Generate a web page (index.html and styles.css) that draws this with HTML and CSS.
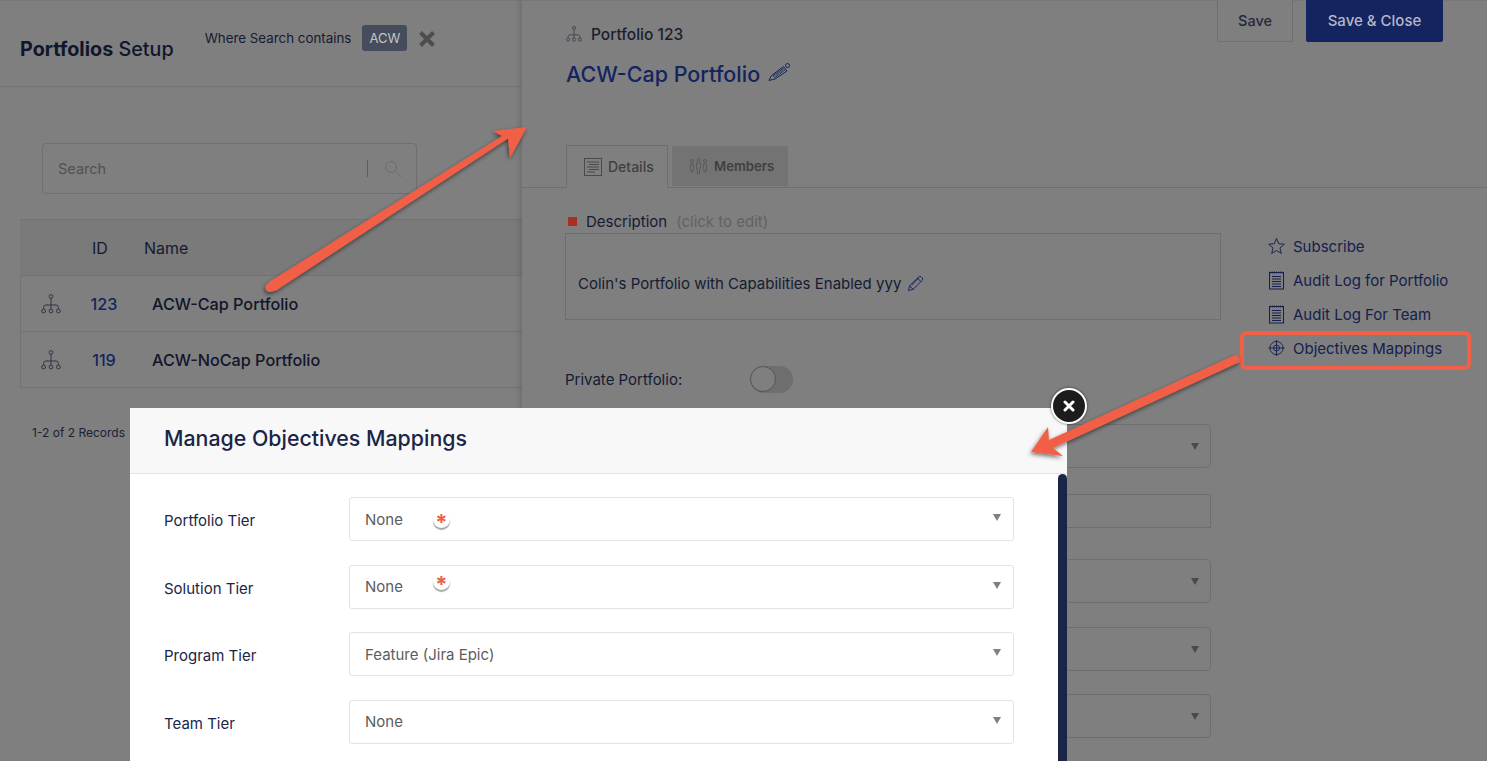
FILE: index.html
```html
<!DOCTYPE html>
<html lang="en">
<head>
    <meta charset="UTF-8">
    <title>Portfolios Setup</title>
    <link rel="stylesheet" href="styles.css">
</head>
<body>
    <svg width="0" height="0" class="defs">
        <defs>
            <symbol id="tree" viewBox="0 0 20 20">
                <g fill="none" stroke="currentColor" stroke-width="1">
                    <circle cx="10" cy="2.5" r="1.9"/>
                    <circle cx="2.6" cy="17" r="1.9"/>
                    <circle cx="10" cy="17" r="1.9"/>
                    <circle cx="17.4" cy="17" r="1.9"/>
                    <path d="M10 4.4V15M2.6 15V13.400Q2.6 11 5 11H15Q17.4 11 17.4 13.400V15"/>
                </g>
            </symbol>
            <symbol id="log" viewBox="0 0 16 19">
                <g fill="none" stroke="currentColor" stroke-width="1">
                    <rect x="1" y="1.5" width="14" height="16.5"/>
                    <path d="M3.5 5.5H12.5M3.5 8H12.5M3.5 10.5H12.5M3.5 13H12.5M3.5 15.5H12.5"/>
                    <path d="M2 .5V2.5M4 .5V2.5M6 .5V2.5M8 .5V2.5M10 .5V2.5M12 .5V2.5M14 .5V2.5" stroke-width=".8"/>
                </g>
            </symbol>
            <symbol id="pencil" viewBox="0 0 18 18">
                <g fill="none" stroke="currentColor" stroke-width="1">
                    <path d="M1.5 16.5L2.8 11.5L12.5 1.8Q13.6.8 14.8 1.8L16.2 3.2Q17.2 4.4 16.2 5.5L6.5 15.2Z"/>
                    <path d="M2.8 11.5L6.5 15.2M11 3.3L14.7 7M4.8 10.8L12.6 3"/>
                </g>
            </symbol>
        </defs>
    </svg>

    <div class="page">
        <div class="left">
            <header class="top">
                <h1><b>Portfolios</b> Setup</h1>
                <div class="filter">
                    <span>Where Search contains</span>
                    <span class="chip">ACW</span>
                    <svg class="clear" width="18" height="18" viewBox="0 0 18 18"><path d="M2.5 2.5L15.5 15.5M15.5 2.5L2.5 15.5" stroke="#4d4d4d" stroke-width="4"/></svg>
                </div>
            </header>
            <div class="search">
                <span>Search</span>
                <div class="search-end">
                    <i></i>
                    <svg width="18" height="18" viewBox="0 0 18 18" fill="none" stroke="#6d6d6d" stroke-width="1"><circle cx="7" cy="7" r="5.5"/><path d="M11 11L17 17"/></svg>
                </div>
            </div>
            <div class="table">
                <div class="thead"><span class="col-id">ID</span><span>Name</span></div>
                <div class="row">
                    <svg class="tree" width="20" height="20"><use href="#tree"/></svg>
                    <a class="id">123</a><span class="name">ACW-Cap Portfolio</span>
                </div>
                <div class="row">
                    <svg class="tree" width="20" height="20"><use href="#tree"/></svg>
                    <a class="id">119</a><span class="name">ACW-NoCap Portfolio</span>
                </div>
            </div>
            <p class="records">1-2 of 2 Records</p>
        </div>

        <div class="panel">
            <div class="panel-actions">
                <button class="btn">Save</button>
                <button class="btn primary">Save &amp; Close</button>
            </div>
            <div class="crumb"><svg width="16" height="16"><use href="#tree"/></svg>Portfolio 123</div>
            <h2>ACW-Cap Portfolio
                <svg class="title-pencil" width="22" height="20" viewBox="0 0 22 20" fill="none" stroke="#14245f"><path d="M1 18.500L3.500 13.500L15.500 4.500L19 9L7 17Z" stroke-width="1"/><path d="M5 14L16 6M6.500 15.500L17 7.500" stroke-width="1.400" stroke-dasharray="1 .7"/><circle cx="19.500" cy="3.500" r="2" stroke-width="1"/></svg>
            </h2>
            <div class="tabs">
                <div class="tab active">
                    <svg width="18" height="18" viewBox="0 0 18 18" fill="none" stroke="#4a4a4a"><rect x=".5" y=".5" width="17" height="17"/><path d="M3 4H15M5 6.5H15M3 9H15M5 11.5H15M3 14H11"/></svg>
                    Details
                </div>
                <div class="tab">
                    <svg width="19" height="16" viewBox="0 0 19 16" fill="none" stroke="#555" stroke-width=".8"><circle cx="3" cy="3" r="1.500"/><circle cx="9.500" cy="2" r="1.500"/><circle cx="16" cy="3" r="1.500"/><path d="M1.500 6H4.500V11H4V14H2V11H1.500ZM7.500 5H11.500V11H10.500V15.500H8.500V11H7.500ZM14.500 6H17.500V11H17V14H15V11H14.500Z"/></svg>
                    Members
                </div>
            </div>
            <div class="panel-body">
                <div class="main-col">
                    <div class="desc-title"><i class="square"></i>Description<span>(click to edit)</span></div>
                    <div class="desc-box">Colin's Portfolio with Capabilities Enabled yyy
                        <svg class="desc-pencil" width="17" height="17"><use href="#pencil"/></svg>
                    </div>
                    <div class="private">
                        <label>Private Portfolio:</label>
                        <span class="toggle"><i></i></span>
                    </div>
                    <div class="bg-field first"><i class="caret"></i></div>
                    <div class="bg-input"></div>
                    <div class="bg-field f3"><i class="caret"></i></div>
                    <div class="bg-field f4"><i class="caret"></i></div>
                    <div class="bg-field f5"><i class="caret"></i></div>
                </div>
                <ul class="links">
                    <li><svg width="18" height="18" viewBox="0 0 18 18" fill="none" stroke="currentColor"><path d="M9 1L11.300 6.600L17.300 7.100L12.700 11L14.100 16.900L9 13.700L3.900 16.900L5.300 11L.7 7.100L6.700 6.600Z"/></svg>Subscribe</li>
                    <li><svg width="16" height="19"><use href="#log"/></svg>Audit Log for Portfolio</li>
                    <li><svg width="16" height="19"><use href="#log"/></svg>Audit Log For Team</li>
                    <li><svg width="16" height="16" viewBox="0 0 16 16" fill="none" stroke="currentColor" stroke-width=".9"><circle cx="8" cy="8" r="6.600"/><circle cx="8" cy="8" r="3"/><path d="M8 0V16M0 8H16"/></svg>Objectives Mappings</li>
                </ul>
            </div>
        </div>
    </div>

    <div class="modal">
        <div class="modal-head">Manage Objectives Mappings</div>
        <div class="modal-body">
            <div class="form-row">
                <label>Portfolio Tier</label>
                <div class="select">None<span class="req">*</span><i class="caret"></i></div>
            </div>
            <div class="form-row">
                <label>Solution Tier</label>
                <div class="select">None<span class="req up">*</span><i class="caret"></i></div>
            </div>
            <div class="form-row">
                <label>Program Tier</label>
                <div class="select">Feature (Jira Epic)<i class="caret"></i></div>
            </div>
            <div class="form-row">
                <label>Team Tier</label>
                <div class="select">None<i class="caret"></i></div>
            </div>
        </div>
        <div class="scrollbar"></div>
        <div class="modal-close">
            <svg width="12" height="12" viewBox="0 0 12 12"><path d="M2 2L10 10M10 2L2 10" stroke="#fff" stroke-width="3" stroke-linecap="round"/></svg>
        </div>
    </div>

    <!-- annotation arrows -->
    <div class="callout"></div>
    <svg class="arrows" width="1487" height="761" viewBox="0 0 1487 761">
        <defs>
            <filter id="arrowShadow" x="-20%" y="-20%" width="140%" height="140%">
                <feDropShadow dx="-1" dy="2" stdDeviation="2" flood-color="#000" flood-opacity=".55"/>
            </filter>
        </defs>
        <g fill="#f15f47" filter="url(#arrowShadow)">
            <path d="M265.500 286Q265 291 270 292L276 290.500L508 138.500L510 158L527 127L493 131L502 136L269 282Z"/>
            <path d="M1235 355Q1241 356 1239.500 362L1053 448L1063 456L1031 452L1048 427L1049 440Z"/>
        </g>
    </svg>
</body>
</html>
```

FILE: styles.css
```css
* {
    box-sizing: border-box;
}
html, body {
    margin: 0;
    height: 761px;
    overflow: hidden;
}
body {
    position: relative;
    width: 1487px;
    background: #7f7f7f;
    font-family: Inter, "Liberation Sans", sans-serif;
    color: #10162b;
}
.defs {
    position: absolute;
}
i {
    display: block;
}
.page {
    display: flex;
    height: 761px;
    border-top: 1px solid #777;
}

/* left list */
.left {
    width: 522px;
    flex: none;
}
.top {
    display: flex;
    height: 86px;
    padding-left: 20px;
    border-bottom: 1px solid #747474;
}
h1 {
    margin: 36px 0 0;
    font-size: 19.750px;
    line-height: 25px;
    font-weight: 500;
    color: #10162b;
}
h1 b {
    font-weight: 700;
}
.filter {
    display: flex;
    align-items: center;
    height: 26px;
    margin: 24px 0 0 31px;
    font-size: 13.350px;
    color: #141b33;
}
.chip {
    margin-left: 11px;
    padding: 0 7px;
    height: 26px;
    line-height: 26px;
    background: #454d5c;
    color: #c4c4c4;
    border-radius: 3px;
    font-size: 13px;
}
.clear {
    margin: 2px 0 0 11px;
}
.search {
    display: flex;
    align-items: center;
    justify-content: space-between;
    width: 375px;
    height: 51px;
    margin: 56px 0 0 42px;
    padding: 0 14px 0 15px;
    border: 1px solid #6f6f6f;
    border-radius: 4px;
    font-size: 14.500px;
    color: #515151;
}
.search-end {
    display: flex;
    align-items: center;
    gap: 16px;
}
.search-end i {
    width: 1px;
    height: 17px;
    background: #5e5e5e;
}
.table {
    margin: 25px 0 0 20px;
}
.thead {
    display: flex;
    align-items: center;
    height: 57px;
    padding: 1px 0 0 72px;
    background: #7a7a7a;
    border-top: 1px solid #727272;
    border-bottom: 1px solid #727272;
    font-size: 16px;
    color: #141b33;
}
.col-id {
    width: 52px;
}
.row {
    display: flex;
    align-items: center;
    height: 56px;
    padding-left: 20px;
    border: 1px solid #727272;
    border-top: 0;
    border-right: 0;
    font-size: 16.200px;
}
.tree {
    flex: none;
    color: #2f3444;
}
.id {
    width: 28px;
    margin: 0 34px 0 29px;
    text-align: center;
    color: #14245f;
    font-weight: 500;
}
.name {
    font-weight: 500;
    color: #10162b;
}
.records {
    margin: 37px 0 0 32px;
    font-size: 12px;
    color: #1c2133;
}

/* slide in panel */
.panel {
    position: relative;
    flex: 1;
    margin-top: -1px;
    padding: 25px 0 0 44px;
    box-shadow: -3px 0 5px rgba(0, 0, 0, .12);
}
.panel-actions {
    position: absolute;
    top: -2px;
    left: 695px;
    display: flex;
    gap: 13px;
}
.btn {
    width: 76px;
    height: 44px;
    padding: 0;
    background: #7f7f7f;
    border: 1px solid #6f6f6f;
    border-radius: 2px;
    font: 500 14.500px Inter, "Liberation Sans", sans-serif;
    color: #26293a;
}
.btn.primary {
    width: 137px;
    background: #14245f;
    border-color: #14245f;
    color: #b4b8c8;
    font-size: 15px;
}
.crumb {
    display: flex;
    align-items: center;
    gap: 9px;
    height: 18px;
    font-size: 15.500px;
    font-weight: 500;
    color: #1a1e2e;
}
.crumb svg {
    color: #3a3d4a;
}
h2 {
    display: flex;
    align-items: center;
    gap: 8px;
    margin: 15px 0 0;
    height: 32px;
    font-size: 21.500px;
    font-weight: 500;
    color: #14245f;
}
.title-pencil {
    margin-top: -5px;
}
.tabs {
    display: flex;
    gap: 4px;
    height: 43px;
    margin: 55px 0 0 -44px;
    padding-left: 44px;
    border-bottom: 1px solid #6e6e6e;
}
.tab {
    display: flex;
    align-items: center;
    gap: 6px;
    width: 116px;
    padding-left: 17px;
    height: 40px;
    margin-top: 1px;
    background: #737373;
    font-size: 13.200px;
    font-weight: 600;
    color: #404040;
}
.tab.active {
    width: 102px;
    height: 43px;
    margin-top: 0;
    background: #7f7f7f;
    border: 1px solid #6e6e6e;
    border-bottom: 1px solid #7f7f7f;
    font-size: 14px;
    font-weight: 500;
}
.panel-body {
    display: flex;
}
.main-col {
    width: 656px;
    margin-left: -1px;
}
.desc-title {
    display: flex;
    align-items: center;
    height: 20px;
    margin-top: 23px;
    font-size: 15px;
    color: #141b33;
}
.square {
    width: 9px;
    height: 9px;
    margin: 0 9px 0 3px;
    background: #a8301f;
}
.desc-title span {
    margin-left: 9px;
    color: #626262;
}
.desc-box {
    display: flex;
    align-items: center;
    gap: 6px;
    height: 87px;
    margin-top: 2px;
    padding: 14px 12px 0;
    border: 1px solid #6e6e6e;
    font-size: 15px;
    color: #141b33;
}
.desc-pencil {
    color: #14245f;
}
.private {
    display: flex;
    align-items: center;
    height: 28px;
    margin-top: 45px;
    font-size: 15px;
    color: #141b33;
}
.private label {
    width: 185px;
}
.toggle {
    position: relative;
    display: block;
    width: 43px;
    height: 27px;
    background: #6e6e6e;
    border-radius: 14px;
}
.toggle i {
    width: 26px;
    height: 26px;
    background: #7f7f7f;
    border: 1px solid #555;
    border-radius: 50%;
}
.bg-field, .bg-input {
    margin-left: 500px;
    width: 146px;
    border: 1px solid #6e6e6e;
}
.bg-field {
    position: relative;
    height: 44px;
    border-radius: 4px;
}
.bg-field.first {
    margin-top: 31px;
}
.bg-input {
    height: 34px;
    margin-top: 26px;
}
.bg-field.f3 {
    margin-top: 31px;
}
.bg-field.f4 {
    margin-top: 24px;
}
.bg-field.f5 {
    margin-top: 23px;
}
.caret {
    position: absolute;
    top: 18px;
    right: 11px;
    width: 0;
    height: 0;
    border-left: 4px solid transparent;
    border-right: 4px solid transparent;
    border-top: 7px solid #4a4a4a;
}
.links {
    list-style: none;
    margin: 0;
    padding: 0 0 0 47px;
    font-size: 15px;
    color: #14204f;
}
.links li {
    display: flex;
    align-items: center;
    height: 34px;
    gap: 8px;
    white-space: nowrap;
}
.links li:first-child {
    margin-top: 41px;
}
.links li svg {
    flex: none;
    width: 17px;
}

/* modal sits over the page */
.modal {
    position: absolute;
    top: 408px;
    left: 130px;
    width: 937px;
    height: 353px;
    background: #fff;
}
.modal-head {
    height: 66px;
    padding: 17px 0 0 34px;
    background: #f8f8f8;
    border-bottom: 1px solid #e4e4e4;
    font-size: 21.350px;
    line-height: 26px;
    font-weight: 500;
    color: #1a2547;
}
.modal-body {
    padding: 23px 53px 0 34px;
}
.form-row {
    display: flex;
    align-items: center;
    height: 44px;
    margin-bottom: 23.500px;
    font-size: 15px;
    color: #1a2547;
}
.form-row label {
    width: 185px;
    padding-top: 3px;
}
.select {
    position: relative;
    flex: 1;
    display: flex;
    align-items: center;
    height: 44px;
    padding-left: 15px;
    border: 1px solid #e3e3e3;
    border-radius: 3px;
    color: #5c5c5c;
}
.select .caret {
    top: 16px;
    right: 12px;
    border-top-color: #808080;
}
.req {
    position: absolute;
    top: 13px;
    left: 83px;
    width: 17px;
    height: 17px;
    border-radius: 50%;
    background: #fff;
    box-shadow: 0 2px 1px rgba(0, 0, 0, .35);
    text-align: center;
    font-size: 22px;
    line-height: 23px;
    font-weight: 700;
    color: #f15f47;
}
.req.up {
    top: 7px;
}
.scrollbar {
    position: absolute;
    top: 66px;
    right: 0;
    width: 9px;
    height: 287px;
    background: #1a2547;
    border-radius: 5px 5px 0 0;
}
.modal-close {
    position: absolute;
    top: -20px;
    right: -20px;
    display: flex;
    align-items: center;
    justify-content: center;
    width: 36px;
    height: 36px;
    background: #1c1c1c;
    border: 2px solid #fff;
    border-radius: 50%;
    box-shadow: 0 0 3px rgba(0, 0, 0, .6);
}

/* annotations */
.callout {
    position: absolute;
    top: 331px;
    left: 1240px;
    width: 231px;
    height: 39px;
    border: 4px solid #f15f47;
    border-radius: 6px;
}
.arrows {
    position: absolute;
    top: 0;
    left: 0;
    pointer-events: none;
}
```
